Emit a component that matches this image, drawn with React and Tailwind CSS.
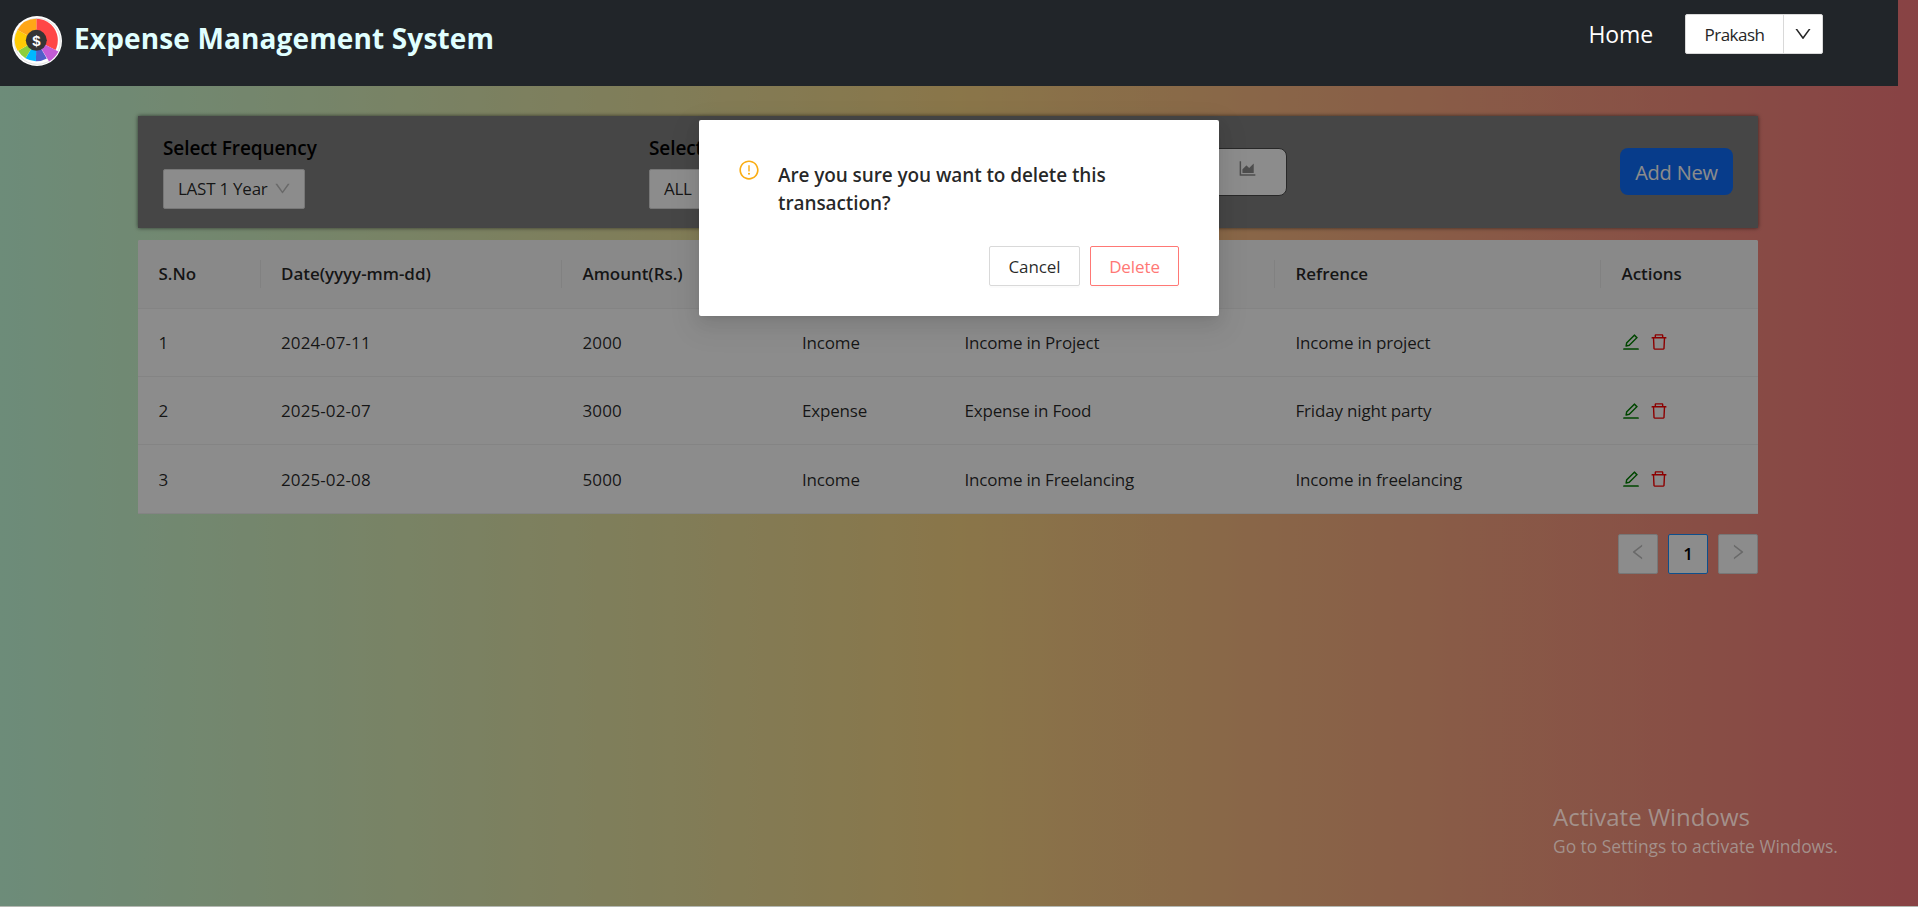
import {
  AiOutlineAreaChart,
  AiOutlineDelete,
  AiOutlineDown,
  AiOutlineEdit,
  AiOutlineExclamationCircle,
  AiOutlineLeft,
  AiOutlineRight,
} from "react-icons/ai";

const slices = [
  { from: 0, to: 117, r: 21.5, color: "#ff4646" },
  { from: 150, to: 181, r: 21, color: "#4f5fc9" },
  { from: 181, to: 211, r: 21, color: "#00b8ff" },
  { from: 211, to: 240, r: 21, color: "#8ccf3c" },
  { from: 240, to: 299, r: 21.5, color: "#ffcb05" },
  { from: 299, to: 360, r: 21.5, color: "#ffa617" },
  { from: 117, to: 149, r: 24.8, color: "#c45cd6" },
];

function wedge({ from, to, r }) {
  const point = (deg) => {
    const a = ((deg - 90) * Math.PI) / 180;
    return `${(24.3 + r * Math.cos(a)).toFixed(2)} ${(24.3 + r * Math.sin(a)).toFixed(2)}`;
  };
  return `M24.3 24.3 L${point(from)} A${r} ${r} 0 0 1 ${point(to)} Z`;
}

function Logo() {
  return (
    <svg viewBox="0 0 50 50" className="mt-4 size-[50px] shrink-0">
      <circle cx="25" cy="25" r="25" fill="#fff" />
      <circle cx="25.3" cy="25.3" r="23" fill="none" stroke="#d9d9d9" strokeWidth="0.8" />
      {slices.map((s) => (
        <path key={s.from} d={wedge(s)} fill={s.color} />
      ))}
      <circle cx="24.3" cy="24.3" r="10.5" fill="#353535" />
      <text
        x="24.3"
        y="29.6"
        textAnchor="middle"
        fill="#fff"
        className="font-['Liberation_Sans'] text-[15px] font-bold"
      >
        $
      </text>
    </svg>
  );
}

function Header() {
  return (
    <header className="relative z-20 flex h-[86px] w-[1898px] items-start bg-[#212529] pl-3">
      <Logo />
      <h1 className="ml-[12px] mt-[19px] whitespace-nowrap text-[28px] font-bold leading-[38px] tracking-[0.14px] text-[#e0ffff]">
        Expense Management System
      </h1>
      <nav className="ml-auto mr-[75px] flex items-start">
        <a className="mr-[32px] mt-[19px] text-[23px] leading-[30px] tracking-[-0.1px] text-white">Home</a>
        <div className="mt-3.5 flex h-10 rounded-[2px] border border-[#d9d9d9] bg-white text-[#262626]">
          <button className="flex w-[98px] items-center justify-center border-r border-[#d9d9d9] pt-px text-[17px] tracking-[-0.5px]">
            Prakash
          </button>
          <button className="flex w-[38px] items-center justify-center text-[20px]">
            <AiOutlineDown />
          </button>
        </div>
      </nav>
    </header>
  );
}

function FilterSelect({ label, value, className }) {
  return (
    <div className={className}>
      <h6 className="mb-[8px] mt-px whitespace-nowrap text-[19px] font-semibold leading-[25px] tracking-[-0.1px] text-black">
        {label}
      </h6>
      <div className="inline-flex h-10 items-center rounded-[2px] border border-[#d9d9d9] bg-white pl-[14px] pr-[12px] text-[17px] tracking-[-0.25px] text-black/85">
        <span>{value}</span>
        <AiOutlineDown className="-mt-0.5 ml-[5px] text-[19px] text-black/25" />
      </div>
    </div>
  );
}

function Filters() {
  return (
    <section className="flex h-28 bg-[#808080] px-[25px] pt-[19px] shadow-[0_0_4px_rgba(0,0,0,0.6)]">
      <FilterSelect className="w-[486px]" label="Select Frequency" value="LAST 1 Year" />
      <FilterSelect className="w-[486px]" label="Select Type" value="ALL" />
      <div className="mt-[13px] flex h-12 w-[152px] justify-end rounded-lg border border-[#4a4a4a] bg-white pr-[28px] pt-[9px] text-[21px] text-black/45">
        <AiOutlineAreaChart />
      </div>
      <button className="ml-auto mt-[13px] h-[47px] w-[113px] rounded-lg bg-[#0d6efd] pt-0.5 text-[20px] tracking-[-0.2px] text-white">
        Add New
      </button>
    </section>
  );
}

const columns = ["S.No", "Date(yyyy-mm-dd)", "Amount(Rs.)", "Type", "Category", "Refrence", "Actions"];
const rows = [
  ["1", "2024-07-11", "2000", "Income", "Income in Project", "Income in project"],
  ["2", "2025-02-07", "3000", "Expense", "Expense in Food", "Friday night party"],
  ["3", "2025-02-08", "5000", "Income", "Income in Freelancing", "Income in freelancing"],
];
const grid = "grid grid-cols-[122.5px_301.5px_219.5px_162.5px_331px_326px_157px] items-center border-b border-[#f0f0f0]";

function TransactionTable() {
  return (
    <section className="mt-3 overflow-hidden rounded-t-[2px] bg-white text-[17px] text-black/85">
      <div className={`${grid} h-[68.5px] bg-[#fafafa] font-semibold tracking-[-0.05px]`}>
        {columns.map((c, i) => (
          <div
            key={c}
            className={`flex h-7 items-center pl-[20.5px] ${i < columns.length - 1 ? "border-r border-black/6" : ""}`}
          >
            {c}
          </div>
        ))}
      </div>
      {rows.map((r) => (
        <div key={r[0]} className={`${grid} h-[68.4px]`}>
          {r.map((cell, i) => (
            <div key={i} className={`pl-[20.5px] pt-px ${i > 2 ? "tracking-[-0.18px]" : "tracking-[0.1px]"}`}>
              {cell}
            </div>
          ))}
          <div className="flex gap-[8px] pl-5 text-[20px]">
            <AiOutlineEdit className="text-[#008000]" />
            <AiOutlineDelete className="text-[#ff0000]" />
          </div>
        </div>
      ))}
    </section>
  );
}

function Pagination() {
  const box = "flex size-10 items-center justify-center rounded-[2px] border bg-white";
  return (
    <div className="mt-5 flex justify-end gap-2.5">
      <button className={`${box} border-[#d9d9d9] pb-1 text-[20px] text-black/25`}>
        <AiOutlineLeft />
      </button>
      <button className={`${box} border-[#1890ff] text-[17px] font-semibold text-black`}>1</button>
      <button className={`${box} border-[#d9d9d9] pb-1 text-[20px] text-black/25`}>
        <AiOutlineRight />
      </button>
    </div>
  );
}

function DeleteDialog() {
  return (
    <div className="absolute inset-0 z-10 flex items-start justify-center bg-black/45 pt-[120px]">
      <div
        role="dialog"
        className="h-[196px] w-[520px] rounded-[2px] bg-white px-10 pt-10 shadow-[0_3px_6px_-4px_rgba(0,0,0,0.12),0_6px_16px_0_rgba(0,0,0,0.08),0_9px_28px_8px_rgba(0,0,0,0.05)]"
      >
        <div className="flex items-start">
          <AiOutlineExclamationCircle className="-ml-[1.5px] -mt-[1.5px] size-[22px] shrink-0 text-[#faad14]" />
          <p className="ml-[18.5px] w-[350px] pt-px text-[19px] font-semibold leading-7 tracking-[-0.1px] text-black/85">
            Are you sure you want to delete this transaction?
          </p>
        </div>
        <div className="mt-[29px] flex justify-end gap-[10px] text-[17px] tracking-[-0.1px]">
          <button className="h-10 w-[91px] rounded-[2px] border border-[#d9d9d9] pt-px text-black/85 shadow-[0_2px_0_rgba(0,0,0,0.016)]">
            Cancel
          </button>
          <button className="h-10 w-[89px] rounded-[2px] border border-[#ff7875] pt-px text-[#ff7875] shadow-[0_2px_0_rgba(0,0,0,0.016)]">
            Delete
          </button>
        </div>
      </div>
    </div>
  );
}

export default function App() {
  return (
    <div className="h-[907px] w-[1918px] overflow-hidden bg-[#b4b8b2] font-['Open_Sans','Noto_Sans',sans-serif]">
      <div className="relative h-[906px] bg-[linear-gradient(to_right,#c6ffdd,#fbd786,#f7797d)]">
        <Header />
        <main className="ml-[138px] mt-[30px] w-[1620px]">
          <Filters />
          <TransactionTable />
          <Pagination />
        </main>
        <DeleteDialog />
        <div className="absolute left-[1553px] top-[799.5px] z-30 whitespace-nowrap text-[#a89d98]/85">
          <div className="text-[24px] leading-[34px]">Activate Windows</div>
          <div className="text-[17.4px] leading-[24px]">Go to Settings to activate Windows.</div>
        </div>
      </div>
    </div>
  );
}
